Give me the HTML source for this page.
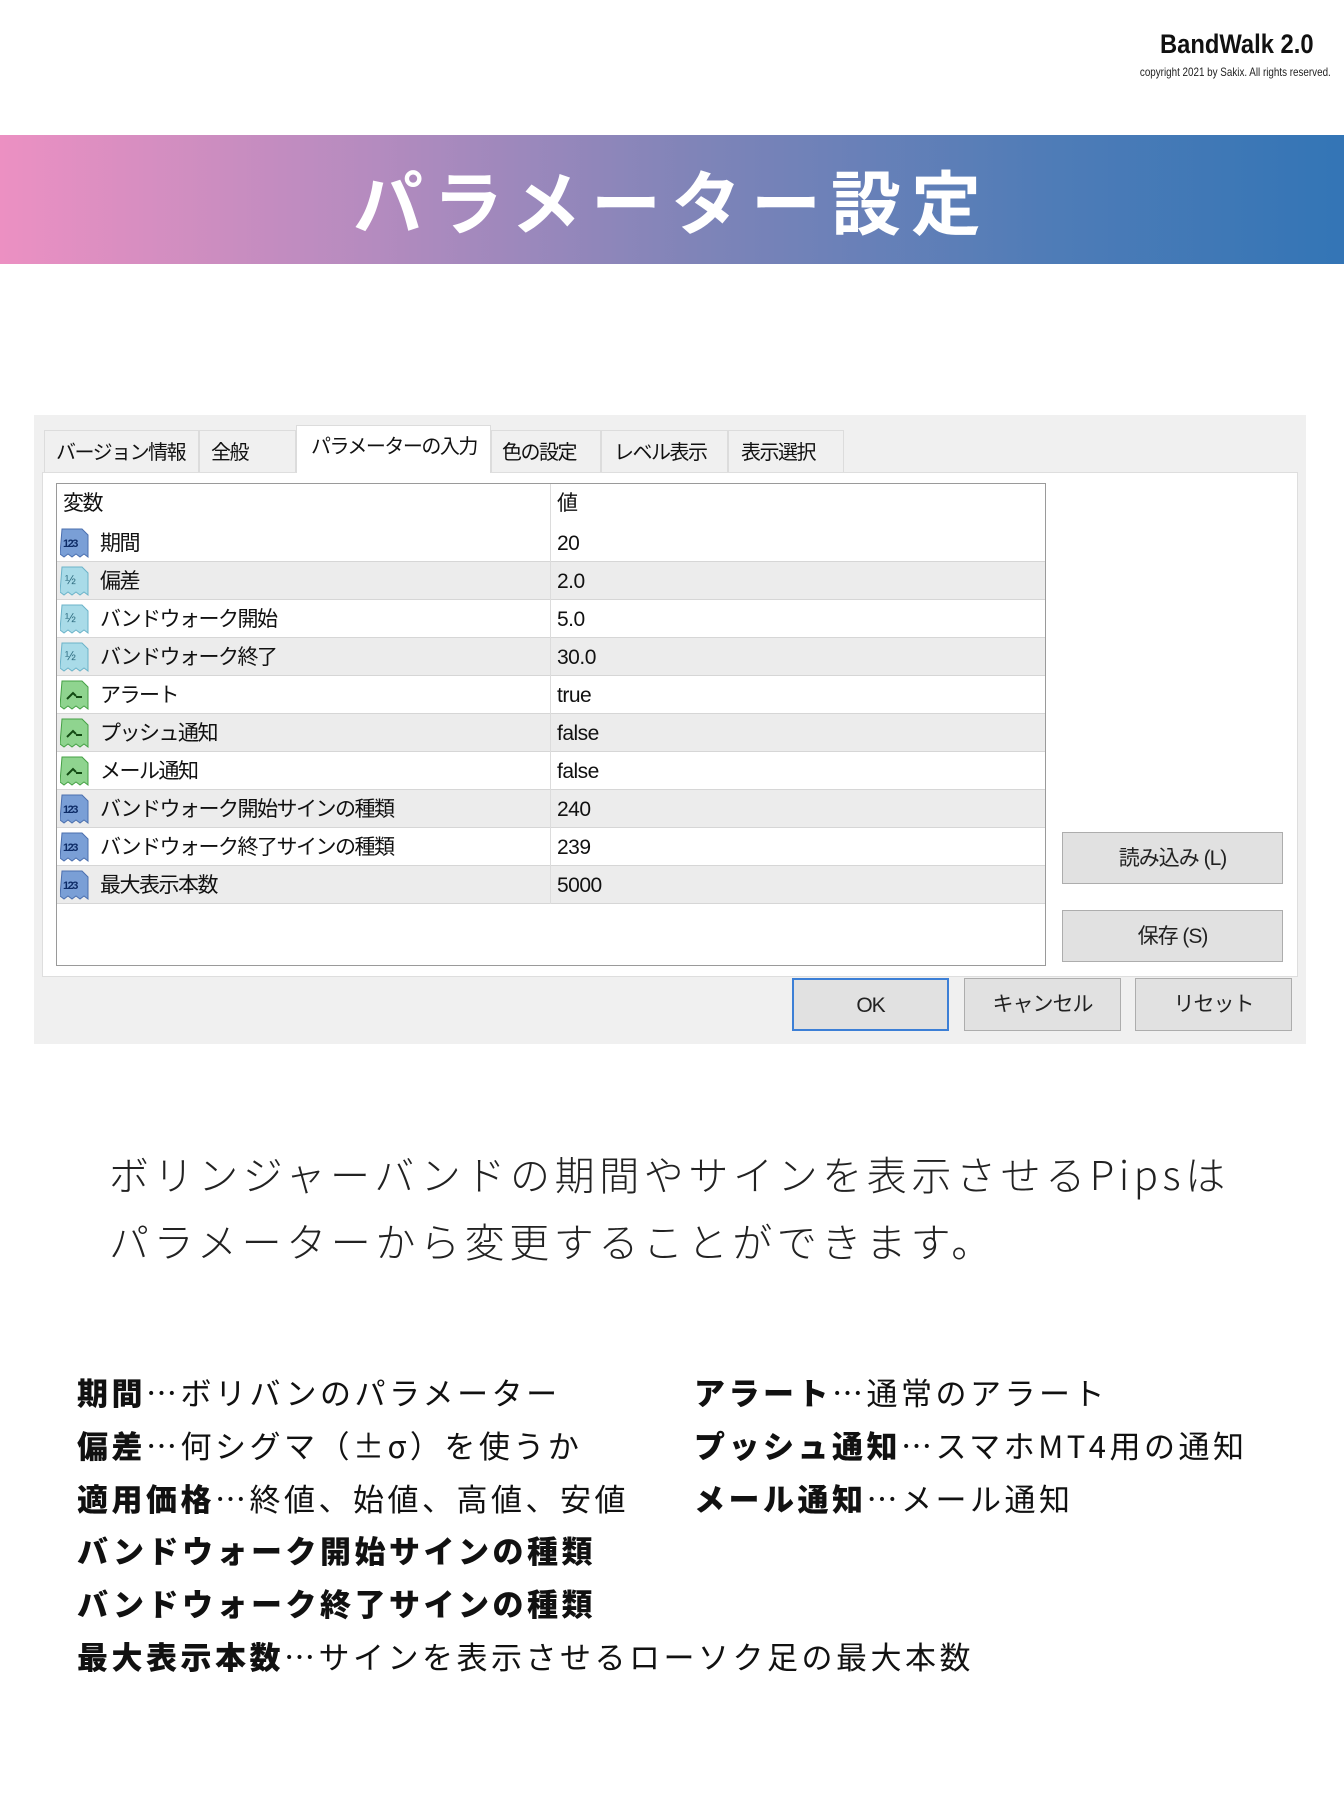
<!DOCTYPE html>
<html><head><meta charset="utf-8">
<style>
*{margin:0;padding:0;box-sizing:border-box}
body{width:1344px;height:1800px;background:#fff;position:relative;overflow:hidden;font-family:"Liberation Sans","Noto Sans CJK JP",sans-serif;color:#111}
.abs{position:absolute;white-space:nowrap}
#brand{right:30px;top:29px;font-weight:bold;font-size:27px;transform:scaleX(.88);transform-origin:right top;color:#111}
#copy{right:13px;top:65px;font-size:12px;transform:scaleX(.82);transform-origin:right top;color:#222}
#banner{left:0;top:135px;width:1344px;height:129px;background:linear-gradient(90deg,#ec90c2 0%,#b48bbf 28%,#7f84b8 52%,#4f7cb7 78%,#3375b6 100%)}
#title{left:0;width:1344px;top:150px;text-align:center;color:#fff;font-weight:bold;font-size:70px;letter-spacing:10px;line-height:100px;font-family:"Noto Sans CJK JP",sans-serif}
#dlg{left:34px;top:415px;width:1272px;height:629px;background:#f0f0f0}
.tab{position:absolute;top:430px;height:42px;background:#f0f0f0;border:1px solid #dcdcdc;border-bottom:none;font-size:20px;letter-spacing:-1.5px;padding-left:11px;line-height:44px;color:#111;white-space:nowrap;overflow:hidden}
.tab.act{top:425px;height:48px;background:#fff;line-height:42px;z-index:2}
#inner{left:42px;top:472px;width:1256px;height:505px;background:#fff;border:1px solid #dedede}
#tbl{left:56px;top:483px;width:990px;height:483px;background:#fff;border:1px solid #9a9a9a}
.row{position:absolute;left:0;width:988px;height:38px;border-bottom:1px solid #d6d6d6;font-size:21px;line-height:40px;letter-spacing:-1.5px;white-space:nowrap}
.row.g{background:#ececec}
.row .n{position:absolute;left:43px}
.row .v{position:absolute;left:500px;letter-spacing:-.5px}
.row .d{position:absolute;left:493px;top:0;width:1px;height:38px;background:#dcdcdc}
.ic{position:absolute;left:3px;top:3px}
.btn{position:absolute;background:#e1e1e1;border:1px solid #adadad;font-size:21px;letter-spacing:-1px;text-align:center;color:#222}
#para{left:109px;top:1140px;font-size:40px;letter-spacing:4.6px;line-height:67px;color:#222;font-weight:300;font-family:"Noto Sans CJK JP",sans-serif}
.li{position:absolute;font-size:31px;letter-spacing:3.5px;color:#111;font-family:"Noto Sans CJK JP",sans-serif;line-height:53px;white-space:nowrap}
.li b{font-weight:900}
</style></head><body>
<div id="brand" class="abs">BandWalk 2.0</div>
<div id="copy" class="abs">copyright 2021 by Sakix. All rights reserved.</div>
<div id="banner" class="abs"></div>
<div id="title" class="abs">パラメーター設定</div>

<div id="dlg" class="abs"></div>
<div class="tab" style="left:44px;width:155px">バージョン情報</div>
<div class="tab" style="left:199px;width:97px">全般</div>
<div class="tab act" style="left:296px;width:195px;padding-left:14px">パラメーターの入力</div>
<div class="tab" style="left:491px;width:110px;padding-left:10px">色の設定</div>
<div class="tab" style="left:601px;width:127px;padding-left:12px">レベル表示</div>
<div class="tab" style="left:728px;width:116px;padding-left:12px">表示選択</div>
<div id="inner" class="abs"></div>
<div id="tbl" class="abs">
<svg width="0" height="0" style="position:absolute"><defs>
<g id="i123"><path d="M2 2h20l6 6v22l-4-3-4 3-4-3-4 3-4-3-4 3-4-3z" fill="#7a9fd6" stroke="#4b6fae"/><text x="3" y="20" font-size="11" font-weight="bold" fill="#0d2b66" font-family="Liberation Sans">123</text></g>
<g id="ihalf"><path d="M2 2h20l6 6v22l-4-3-4 3-4-3-4 3-4-3-4 3-4-3z" fill="#a9dbe8" stroke="#6bb3c9"/><text x="5" y="19" font-size="13" fill="#2f6d80" font-family="Liberation Sans">½</text></g>
<g id="ibool"><path d="M2 2h20l6 6v22l-4-3-4 3-4-3-4 3-4-3-4 3-4-3z" fill="#8fd48f" stroke="#45a045"/><path d="M7 20l6-6 3 3M16 18h6" stroke="#134a13" stroke-width="2" fill="none"/></g>
</defs></svg>
<div class="row" style="top:0;height:40px;border-bottom:none"><span style="position:absolute;left:6px">変数</span><span class="v" style="left:500px">値</span><div class="d" style="height:40px"></div></div>
<div class="row" style="top:40px"><svg class="ic" width="32" height="34"><use href="#i123"/></svg><span class="n">期間</span><div class="d"></div><span class="v">20</span></div>
<div class="row g" style="top:78px"><svg class="ic" width="32" height="34"><use href="#ihalf"/></svg><span class="n">偏差</span><div class="d"></div><span class="v">2.0</span></div>
<div class="row" style="top:116px"><svg class="ic" width="32" height="34"><use href="#ihalf"/></svg><span class="n">バンドウォーク開始</span><div class="d"></div><span class="v">5.0</span></div>
<div class="row g" style="top:154px"><svg class="ic" width="32" height="34"><use href="#ihalf"/></svg><span class="n">バンドウォーク終了</span><div class="d"></div><span class="v">30.0</span></div>
<div class="row" style="top:192px"><svg class="ic" width="32" height="34"><use href="#ibool"/></svg><span class="n">アラート</span><div class="d"></div><span class="v">true</span></div>
<div class="row g" style="top:230px"><svg class="ic" width="32" height="34"><use href="#ibool"/></svg><span class="n">プッシュ通知</span><div class="d"></div><span class="v">false</span></div>
<div class="row" style="top:268px"><svg class="ic" width="32" height="34"><use href="#ibool"/></svg><span class="n">メール通知</span><div class="d"></div><span class="v">false</span></div>
<div class="row g" style="top:306px"><svg class="ic" width="32" height="34"><use href="#i123"/></svg><span class="n">バンドウォーク開始サインの種類</span><div class="d"></div><span class="v">240</span></div>
<div class="row" style="top:344px"><svg class="ic" width="32" height="34"><use href="#i123"/></svg><span class="n">バンドウォーク終了サインの種類</span><div class="d"></div><span class="v">239</span></div>
<div class="row g" style="top:382px"><svg class="ic" width="32" height="34"><use href="#i123"/></svg><span class="n">最大表示本数</span><div class="d"></div><span class="v">5000</span></div>
</div>
<div class="btn" style="left:1062px;top:832px;width:221px;height:52px;line-height:52px">読み込み (L)</div>
<div class="btn" style="left:1062px;top:910px;width:221px;height:52px;line-height:52px">保存 (S)</div>
<div class="btn" style="left:792px;top:978px;width:157px;height:53px;line-height:51px;border:2px solid #3c7fd6">OK</div>
<div class="btn" style="left:964px;top:978px;width:157px;height:53px;line-height:51px">キャンセル</div>
<div class="btn" style="left:1135px;top:978px;width:157px;height:53px;line-height:51px">リセット</div>

<div id="para" class="abs">ボリンジャーバンドの期間やサインを表示させるPipsは<br>パラメーターから変更することができます。</div>

<div class="li" style="left:77px;top:1365px"><b>期間</b>…ボリバンのパラメーター</div>
<div class="li" style="left:77px;top:1418px"><b>偏差</b>…何シグマ（±σ）を使うか</div>
<div class="li" style="left:77px;top:1471px"><b>適用価格</b>…終値、始値、高値、安値</div>
<div class="li" style="left:77px;top:1523px"><b>バンドウォーク開始サインの種類</b></div>
<div class="li" style="left:77px;top:1576px"><b>バンドウォーク終了サインの種類</b></div>
<div class="li" style="left:77px;top:1629px"><b>最大表示本数</b>…サインを表示させるローソク足の最大本数</div>
<div class="li" style="left:694px;top:1365px"><b>アラート</b>…通常のアラート</div>
<div class="li" style="left:694px;top:1418px"><b>プッシュ通知</b>…スマホMT4用の通知</div>
<div class="li" style="left:694px;top:1471px"><b>メール通知</b>…メール通知</div>
</body></html>
